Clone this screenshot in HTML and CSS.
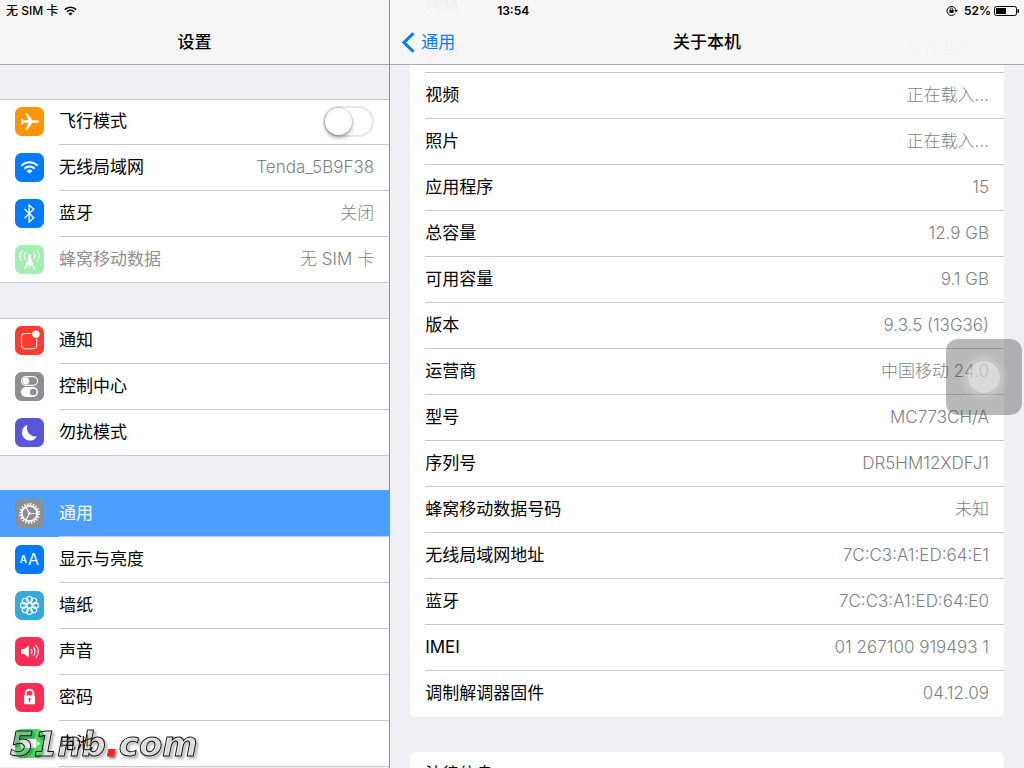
FILE: index.html
```html
<!DOCTYPE html>
<html lang="zh-CN">
<head>
<meta charset="utf-8">
<meta name="viewport" content="width=device-width, initial-scale=1">
<title>设置</title>
<link rel="stylesheet" href="styles.css">
</head>
<body>
<div class="screen">
  <aside class="sidebar">
    <header class="bar">
      <div class="status">
        <span>无 SIM 卡</span>
        <svg class="status-wifi" viewBox="0 0 13 10" aria-hidden="true"><path d="M.8 3.6a8.2 8.2 0 0 1 11.4 0M2.8 5.8a5.3 5.3 0 0 1 7.4 0" fill="none" stroke="#000" stroke-width="1.5"/><path d="M6.5 9.6 4.4 7.5a3 3 0 0 1 4.2 0z"/></svg>
      </div>
      <h1 class="title">设置</h1>
    </header>
    <nav class="menu">
      <ul class="group">
        <li class="item">
          <svg class="icon" viewBox="0 0 29 29"><rect width="29" height="29" rx="6.5" fill="#ff9500"/><path d="M24.2 14.5c0-.9-1.2-1.2-2.2-1.2h-4.4L12.300 6.300h-1.900l2.800 7H8.600L6.800 10.900H5.700l.9 3.600-.9 3.600h1.100l1.800-2.400h4.600l-2.800 7h1.900l5.300-7H22c1 0 2.200-.3 2.200-1.200z" fill="#fff"/></svg>
          <label class="item-body" for="airplane"><span class="name">飞行模式</span><input class="switch" id="airplane" type="checkbox" role="switch"></label>
        </li>
        <li class="item">
          <svg class="icon" viewBox="0 0 29 29"><rect width="29" height="29" rx="6.500" fill="#007aff"/><path d="M6.400 12.700a11.500 11.500 0 0 1 16.200 0M9.400 15.700a7.200 7.200 0 0 1 10.200 0" fill="none" stroke="#fff" stroke-width="2"/><path d="m14.500 20.800-2.900-2.900a4.200 4.200 0 0 1 5.800 0z" fill="#fff"/></svg>
          <div class="item-body"><span class="name">无线局域网</span><span class="value">Tenda_5B9F38</span></div>
        </li>
        <li class="item">
          <svg class="icon" viewBox="0 0 29 29"><rect width="29" height="29" rx="6.500" fill="#007aff"/><path d="m9.500 10 9.300 8.800-4.700 4.200V6l4.700 4.200L9.500 19" fill="none" stroke="#fff" stroke-width="1.400"/></svg>
          <div class="item-body"><span class="name">蓝牙</span><span class="value">关闭</span></div>
        </li>
        <li class="item disabled">
          <svg class="icon" viewBox="0 0 29 29"><rect width="29" height="29" rx="6.500" fill="#a6edb2"/><g fill="none" stroke="#fff" stroke-width="1.200"><path d="M14.500 11.500 9.600 24M14.500 11.500 19.400 24M12.800 16l5.600 5.800M16.200 16l-5.600 5.800M14.500 11.500V24M10.600 7.400a5 5 0 0 0 0 7M18.400 7.400a5 5 0 0 1 0 7M7.200 5.400a7.800 7.800 0 0 0 0 11M21.800 5.400a7.800 7.800 0 0 1 0 11"/></g><circle cx="14.500" cy="11" r="1.700" fill="#fff"/></svg>
          <div class="item-body"><span class="name">蜂窝移动数据</span><span class="value">无 SIM 卡</span></div>
        </li>
      </ul>
      <ul class="group">
        <li class="item">
          <svg class="icon" viewBox="0 0 29 29"><rect width="29" height="29" rx="6.500" fill="#ff3b30"/><path d="M16.300 7.500H10A3.500 3.500 0 0 0 6.500 11v8.200a3.500 3.500 0 0 0 3.500 3.500h8.200a3.500 3.500 0 0 0 3.500-3.500V13" fill="none" stroke="#fff" stroke-width="1.100"/><circle cx="20.900" cy="8.300" r="3.700" fill="#fff"/></svg>
          <div class="item-body"><span class="name">通知</span></div>
        </li>
        <li class="item">
          <svg class="icon" viewBox="0 0 29 29"><rect width="29" height="29" rx="6.500" fill="#8e8e93"/><rect x="6.500" y="4.600" width="16" height="8.800" rx="4.400" fill="none" stroke="#fff" stroke-width="1.100"/><circle cx="10.900" cy="9" r="3.400" fill="#fff"/><rect x="6" y="15" width="17" height="10" rx="5" fill="#fff"/><circle cx="18.200" cy="20" r="3.300" fill="#8e8e93"/></svg>
          <div class="item-body"><span class="name">控制中心</span></div>
        </li>
        <li class="item">
          <svg class="icon" viewBox="0 0 29 29"><rect width="29" height="29" rx="6.500" fill="#5856d6"/><path d="M12.400 7a8 8 0 1 0 9.600 11.300A8.600 8.600 0 0 1 12.400 7z" fill="#fff"/></svg>
          <div class="item-body"><span class="name">勿扰模式</span></div>
        </li>
      </ul>
      <ul class="group open">
        <li class="item selected">
          <svg class="icon" viewBox="0 0 29 29"><rect width="29" height="29" rx="6.500" fill="#8e8e93"/><g fill="none" stroke="#fff"><circle cx="14.500" cy="14.500" r="9.400" stroke-width="2" stroke-dasharray="1.480 1.480"/><circle cx="14.500" cy="14.500" r="7.700" stroke-width="1.700"/><path d="M14.500 14.500h7.500M14.500 14.500l-3.700-6.500M14.500 14.500l-3.700 6.500" stroke-width="1.100"/></g><circle cx="14.500" cy="14.500" r="1.400" fill="#fff"/></svg>
          <div class="item-body"><span class="name">通用</span></div>
        </li>
        <li class="item">
          <span class="icon icon-text" aria-hidden="true"><span class="small-a">A</span><span class="large-a">A</span></span>
          <div class="item-body"><span class="name">显示与亮度</span></div>
        </li>
        <li class="item">
          <svg class="icon" viewBox="0 0 29 29"><rect width="29" height="29" rx="6.500" fill="#34aadc"/><g fill="none" stroke="#fff" stroke-width="1.100"><circle cx="14.500" cy="14.500" r="2.600"/><circle cx="14.500" cy="8.400" r="2.900"/><circle cx="18.800" cy="10.200" r="2.900"/><circle cx="20.600" cy="14.500" r="2.900"/><circle cx="18.800" cy="18.800" r="2.900"/><circle cx="14.500" cy="20.600" r="2.900"/><circle cx="10.200" cy="18.800" r="2.900"/><circle cx="8.400" cy="14.500" r="2.900"/><circle cx="10.200" cy="10.200" r="2.900"/></g></svg>
          <div class="item-body"><span class="name">墙纸</span></div>
        </li>
        <li class="item">
          <svg class="icon" viewBox="0 0 29 29"><rect width="29" height="29" rx="6.500" fill="#ff2d55"/><path d="M6 12h3l4.800-3.600v12.200L9 17H6z" fill="#fff"/><path d="M15.900 12.200a3.600 3.600 0 0 1 0 4.600M18.200 10a6.600 6.600 0 0 1 0 9M20.600 7.800a9.600 9.600 0 0 1 0 13.400" fill="none" stroke="#fff" stroke-width="1.200"/></svg>
          <div class="item-body"><span class="name">声音</span></div>
        </li>
        <li class="item">
          <svg class="icon" viewBox="0 0 29 29"><rect width="29" height="29" rx="6.500" fill="#ff2d55"/><path d="M10.700 13.500v-3a3.800 3.800 0 0 1 7.600 0v3" fill="none" stroke="#fff" stroke-width="2"/><rect x="9" y="12.600" width="11" height="8.600" rx=".6" fill="#fff"/><path d="M14.500 15a1.200 1.200 0 0 1 .5 2.300V19h-1v-1.700a1.200 1.200 0 0 1 .5-2.300z" fill="#ff2d55"/></svg>
          <div class="item-body"><span class="name">密码</span></div>
        </li>
        <li class="item">
          <svg class="icon" viewBox="0 0 29 29"><rect width="29" height="29" rx="6.500" fill="#4cd964"/><rect x="5.500" y="10" width="16" height="9" rx="2" fill="#fff"/><path d="M22.500 12.500a2 2 0 0 1 0 4z" fill="#fff"/></svg>
          <div class="item-body"><span class="name">电池</span></div>
        </li>
      </ul>
    </nav>
    <p class="watermark">51nb<span class="dot">.</span>com</p>
  </aside>

  <main class="detail">
    <header class="bar bar-detail">
      <div class="status">
        <time class="clock">13:54</time>
        <svg class="status-lock" viewBox="0 0 12 11" aria-hidden="true"><path d="M9.300 8.400a4.500 4.500 0 1 1 .7-2.900" fill="none" stroke="#000" stroke-width="1"/><path d="M8 5h4l-2 2.400z"/><rect x="3.400" y="4.900" width="4.200" height="3" /><path d="M4.300 5v-.8a1.200 1.200 0 0 1 2.400 0V5" fill="none" stroke="#000" stroke-width=".8"/></svg>
        <span>52%</span>
        <svg class="status-battery" viewBox="0 0 25 10" aria-hidden="true"><rect x=".5" y=".5" width="22" height="9" rx="2" fill="none" stroke="#000"/><rect x="2" y="2" width="10" height="6"/><path d="M23.500 3a2 2 0 0 1 0 4z"/></svg>
      </div>
      <div class="nav">
        <button class="back" type="button"><svg class="chevron" viewBox="0 0 13 21" aria-hidden="true"><path d="M11.500 1.200 2 10.500l9.500 9.300" fill="none" stroke="#007aff" stroke-width="3"/></svg>通用</button>
        <h2 class="title">关于本机</h2>
      </div>
    </header>
    <div class="scroll">
      <dl class="card">
        <div class="row"><dt>网络</dt><dd>不可用</dd></div>
        <div class="row"><dt>歌曲</dt><dd>正在载入...</dd></div>
        <div class="row"><dt>视频</dt><dd>正在载入...</dd></div>
        <div class="row"><dt>照片</dt><dd>正在载入...</dd></div>
        <div class="row"><dt>应用程序</dt><dd>15</dd></div>
        <div class="row"><dt>总容量</dt><dd>12.9 GB</dd></div>
        <div class="row"><dt>可用容量</dt><dd>9.1 GB</dd></div>
        <div class="row"><dt>版本</dt><dd>9.3.5 (13G36)</dd></div>
        <div class="row"><dt>运营商</dt><dd>中国移动 24.0</dd></div>
        <div class="row"><dt>型号</dt><dd>MC773CH/A</dd></div>
        <div class="row"><dt>序列号</dt><dd>DR5HM12XDFJ1</dd></div>
        <div class="row"><dt>蜂窝移动数据号码</dt><dd>未知</dd></div>
        <div class="row"><dt>无线局域网地址</dt><dd>7C:C3:A1:ED:64:E1</dd></div>
        <div class="row"><dt>蓝牙</dt><dd>7C:C3:A1:ED:64:E0</dd></div>
        <div class="row"><dt>IMEI</dt><dd>01 267100 919493 1</dd></div>
        <div class="row"><dt>调制解调器固件</dt><dd>04.12.09</dd></div>
      </dl>
      <dl class="card">
        <div class="row"><dt>法律信息</dt><dd></dd></div>
      </dl>
    </div>
    <button class="assistive" type="button" aria-label="AssistiveTouch"><span class="ring"></span></button>
  </main>
</div>
</body>
</html>
```
FILE: styles.css
```css
* {
  box-sizing: border-box;
}

body {
  margin: 0;
  background: #efeff4;
  color: #000;
  font: 17px/24px Inter, "Noto Sans CJK SC", sans-serif;
}

h1, h2, p, ul, dl, dd {
  margin: 0;
  padding: 0;
}

.screen {
  display: flex;
  height: 100vh;
  overflow: hidden;
}

.sidebar {
  position: relative;
  flex: 0 0 38.1%;
  border-right: 1px solid #8e8e93;
  overflow: hidden;
}

.detail {
  position: relative;
  flex: 1;
  overflow: hidden;
}

/* Title bars */

.bar {
  height: 65px;
  border-bottom: 1px solid #a7a7ac;
  background: #f6f6f6;
}

.bar-detail {
  position: absolute;
  inset: 0 0 auto;
  z-index: 1;
  background: rgba(246, 246, 247, 0.97);
}

.status {
  display: flex;
  align-items: center;
  gap: 6px;
  height: 21px;
  padding: 0 5px 0 6px;
  font-size: 12px;
  font-weight: 500;
  line-height: 21px;
}

.bar-detail .status {
  font-weight: 600;
  gap: 3px;
}

.status-wifi {
  width: 13px;
  height: 10px;
}

.clock {
  margin: 0 auto 0 101px;
}

.status-lock {
  width: 12px;
  height: 11px;
  margin-right: 3px;
}

.status-battery {
  width: 25px;
  height: 10px;
}

.title {
  font-size: 17px;
  font-weight: 500;
  line-height: 42px;
  text-align: center;
}

.nav {
  display: grid;
  grid-template-columns: 1fr auto 1fr;
  align-items: center;
}

.back {
  display: flex;
  align-items: center;
  gap: 6px;
  justify-self: start;
  margin-left: 12px;
  padding: 0;
  border: 0;
  background: none;
  color: #007aff;
  font: inherit;
}

.chevron {
  width: 13px;
  height: 21px;
}

/* Settings menu */

.menu {
  display: flex;
  flex-direction: column;
  gap: 35px;
  padding-top: 34px;
}

.group {
  background: #fff;
  box-shadow: inset 0 1px #c8c7cc;
  list-style: none;
}

.item {
  display: grid;
  grid-template-columns: 29px 1fr;
  gap: 15px;
  height: 46px;
  padding-left: 15px;
}

.item-body {
  display: flex;
  align-items: center;
  justify-content: space-between;
  padding: 0 15px 1px 0;
  border-bottom: 1px solid #c8c7cc;
}

.group:not(.open) .item:last-child {
  border-bottom: 1px solid #c8c7cc;
}

.group:not(.open) .item:last-child .item-body {
  border-bottom: 0;
}

.icon {
  width: 29px;
  height: 29px;
  margin-top: 8px;
}

.icon-text {
  display: flex;
  align-items: center;
  justify-content: center;
  gap: 1px;
  border-radius: 6px;
  background: #007aff;
  color: #fff;
  line-height: 29px;
}

.small-a {
  font-size: 10px;
  font-weight: 600;
}

.large-a {
  font-size: 16px;
}

.value {
  color: #7e7e84;
  font-weight: 300;
}

.disabled {
  color: #8e8e93;
}

.selected {
  background: #4c9fff;
  box-shadow: 0 -1px #4c9fff;
  color: #fff;
}

.switch {
  width: 51px;
  height: 31px;
  margin: 0;
  border: 2px solid #e5e5e5;
  border-radius: 16px;
  appearance: none;
}

.switch::before {
  display: block;
  width: 27px;
  height: 27px;
  border-radius: 50%;
  background: #fff;
  box-shadow: 0 0 0 1px rgba(0, 0, 0, 0.12), 0 3px 4px rgba(0, 0, 0, 0.3);
  content: "";
}

.switch:checked::before {
  margin-left: 20px;
}

/* About list */

.scroll {
  display: flex;
  flex-direction: column;
  gap: 35px;
  margin-top: -19px;
  padding: 0 20px;
}

.card {
  padding-left: 15px;
  border-radius: 5px;
  background: #fff;
}

.row {
  display: flex;
  align-items: center;
  justify-content: space-between;
  height: 46px;
  padding: 0 15px 1px 0;
  border-bottom: 1px solid #c8c7cc;
}

.row:last-child {
  padding-bottom: 2px;
  border-bottom: 0;
}

.row dd {
  color: #7e7e84;
  font-weight: 300;
}

/* Floating overlays */

.assistive {
  position: absolute;
  top: 339px;
  right: 2px;
  display: grid;
  place-items: center;
  width: 76px;
  height: 76px;
  padding: 0;
  border: 0;
  border-radius: 12px;
  background: rgba(70, 70, 70, 0.38);
}

.ring {
  width: 32px;
  height: 32px;
  border-radius: 50%;
  background: rgba(235, 235, 235, 0.65);
  box-shadow: 0 0 0 4px rgba(255, 255, 255, 0.12), 0 0 0 8px rgba(255, 255, 255, 0.08);
}

.watermark {
  position: absolute;
  bottom: 4px;
  left: 10px;
  color: rgba(255, 255, 255, 0.25);
  filter: drop-shadow(2px 2px 1px rgba(0, 0, 0, 0.5));
  font: italic 700 34px/40px "DejaVu Sans", sans-serif;
  -webkit-text-stroke: 1px #111;
}

.dot {
  color: #f22;
  -webkit-text-stroke: 1px #f22;
}
```
